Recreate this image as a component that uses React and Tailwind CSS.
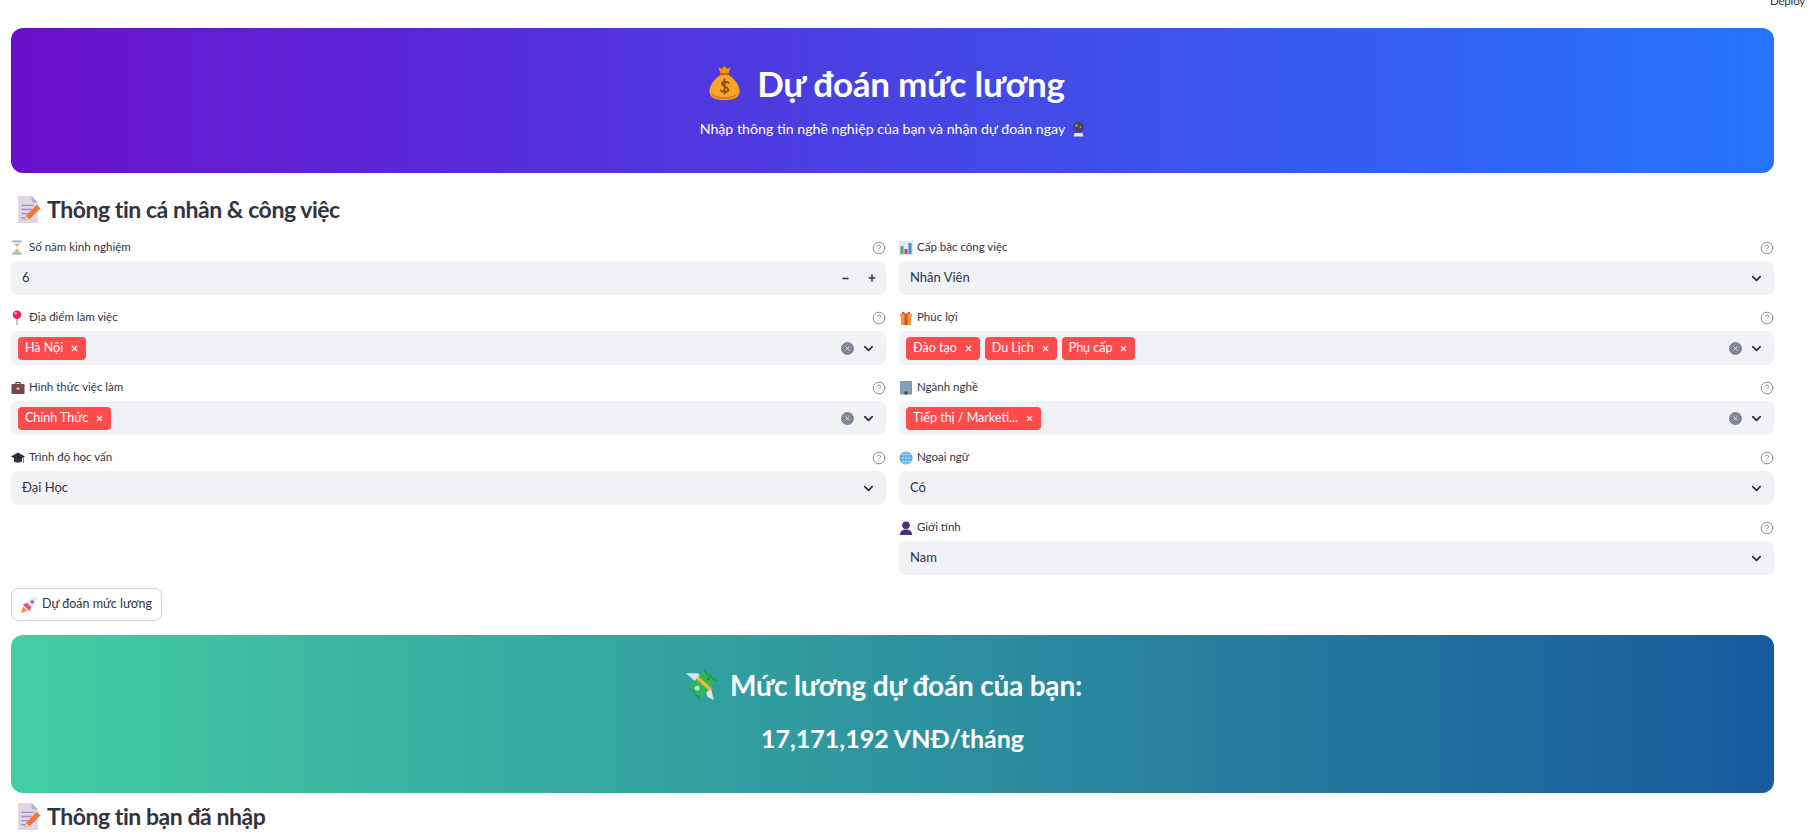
import { ChevronDown, Minus, Plus, X, CircleHelp } from "lucide-react";

const MoneyBag = ({ className }) => (
  <svg viewBox="0 0 32 36" className={className}>
    <path d="M10 2l3 2 3-3 3 3 3-2-2 7h-8z" fill="#e8930c" />
    <rect x="11.5" y="8" width="9" height="2.5" rx="1" fill="#b8620f" />
    <path d="M12 10h8c6 4 11 10 11 16 0 7-6 9-15 9S1 33 1 26c0-6 5-12 11-16z" fill="#f5a623" />
    <path d="M3 28c0 4 6 6 13 6s13-2 13-6c-3 3-8 4-13 4s-10-1-13-4z" fill="#e07b1a" />
    <path d="M20 18c-1-1.500-6-2-6.500 .5S20 22 19.800 25c-.2 2.500-6 2.500-7.500 .5M16 14.500v14" fill="none" stroke="#8a4a12" strokeWidth="1.800" strokeLinecap="round" />
  </svg>
);

const Memo = ({ className }) => (
  <svg viewBox="0 0 24 28" className={className}>
    <path d="M2 1h13l6 6v20H2z" fill="#ddd6e8" />
    <path d="M15 1l6 6h-6z" fill="#b9aecb" />
    <path d="M5 10h12M5 14h10M5 18h7M5 22h4" stroke="#9d93ae" strokeWidth="1.400" />
    <path d="M8 25l1.500-5L20 9.500l3.500 3.500L13 23.500z" fill="#f4743b" />
    <path d="M8 25l1.500-5 3.500 3.500z" fill="#f8c9a0" />
  </svg>
);

const Hourglass = () => (
  <svg viewBox="0 0 12 16" className="w-[12px] h-[15px]">
    <rect x="1" y="0.500" width="10" height="2" fill="#8fb3c9" />
    <rect x="1" y="13.500" width="10" height="2" fill="#8fb3c9" />
    <path d="M2 2.500h8c0 3-3 4-3 5.500s3 2.500 3 5.500H2c0-3 3-4 3-5.500S2 5.500 2 2.500z" fill="#e3edf2" />
    <path d="M3.500 4h5c-.5 1.500-2 2.500-2.500 3.500C5.500 6.500 4 5.500 3.500 4zM3 13.500c.5-2 2.500-3 3-4 .5 1 2.500 2 3 4z" fill="#eab04f" />
  </svg>
);

const Pin = () => (
  <svg viewBox="0 0 12 16" className="w-[12px] h-[15px]">
    <path d="M6 9v7" stroke="#9a9aa5" strokeWidth="1.200" />
    <circle cx="6" cy="5" r="4.500" fill="#e91e63" />
    <circle cx="4.500" cy="3.500" r="1.300" fill="#f8a0bd" />
  </svg>
);

const Briefcase = () => (
  <svg viewBox="0 0 14 14" className="w-[14px] h-[14px]">
    <path d="M5 3V1.500h4V3" fill="none" stroke="#4a3038" strokeWidth="1.200" />
    <rect x="0.500" y="3" width="13" height="10" rx="1" fill="#74474f" />
    <rect x="5.500" y="6.500" width="3" height="2.500" fill="#d9b25f" />
  </svg>
);

const GradCap = () => (
  <svg viewBox="0 0 14 14" className="w-[14px] h-[14px]">
    <path d="M3 7v3.500c1 1.500 7 1.500 8 0V7z" fill="#3c3446" />
    <path d="M7 1.500L14 5.500 7 9 0 5.500z" fill="#2f2a38" />
    <path d="M12.500 6v6" stroke="#e0603c" strokeWidth="1" />
  </svg>
);

const BarChart = () => (
  <svg viewBox="0 0 14 14" className="w-[14px] h-[14px]">
    <rect width="14" height="14" fill="#dfe7ec" />
    <rect x="1.500" y="5" width="3" height="8" fill="#45b36b" />
    <rect x="5.500" y="8" width="3" height="5" fill="#e8356d" />
    <rect x="9.500" y="2" width="3" height="11" fill="#3a93d8" />
  </svg>
);

const Gift = () => (
  <svg viewBox="0 0 14 14" className="w-[14px] h-[14px]">
    <path d="M7 3L4 .500 2.500 2 4 3.500zM7 3l3-2.500L11.500 2 10 3.500z" fill="#e0463c" />
    <rect x="1" y="3" width="12" height="3" fill="#f2a33a" />
    <rect x="2" y="6" width="10" height="8" fill="#ee9a2e" />
    <rect x="5.500" y="3" width="3" height="11" fill="#e0463c" />
  </svg>
);

const Office = () => (
  <svg viewBox="0 0 14 14" className="w-[14px] h-[15px]">
    <rect x="1" y="0.500" width="12" height="13.500" fill="#8a98a6" />
    <rect x="3" y="2" width="8" height="9" fill="#7fa9cc" />
    <path d="M5.500 2v9M8.500 2v9M3 5h8M3 8h8" stroke="#8a98a6" strokeWidth=".6" />
    <rect x="5.500" y="11" width="3" height="3" fill="#3d4a57" />
  </svg>
);

const Globe = () => (
  <svg viewBox="0 0 14 14" className="w-[14px] h-[14px]">
    <circle cx="7" cy="7" r="6.500" fill="#4aa6e8" />
    <path d="M.500 7h13M7 .500v13M2 3.500h10M2 10.500h10" stroke="#bfe2f8" strokeWidth=".7" />
    <ellipse cx="7" cy="7" rx="3.200" ry="6.500" fill="none" stroke="#bfe2f8" strokeWidth=".7" />
  </svg>
);

const Bust = () => (
  <svg viewBox="0 0 14 14" className="w-[14px] h-[14px]">
    <circle cx="7" cy="4.300" r="3.800" fill="#4f2d7f" />
    <path d="M1 14c0-4 2.500-5.500 6-5.500s6 1.500 6 5.500z" fill="#4f2d7f" />
  </svg>
);

const Rocket = () => (
  <svg viewBox="0 0 14 14" className="w-[16px] h-[16px]">
    <path d="M4 6.500C6 3 9.500 .500 14 0 13.500 4.500 11 8 7.500 10z" fill="#e8e2ee" />
    <path d="M1.500 6.500L5 5l4 4-1.500 3.500z" fill="#ec4f7d" />
    <circle cx="9.800" cy="4.200" r="1.400" fill="#5a6fb0" />
    <path d="M0 14l1.800-5.500L5.500 12z" fill="#f58b3c" />
  </svg>
);

const MoneyWings = () => (
  <svg viewBox="0 0 30 30" className="w-[32px] h-[32px]">
    <path d="M0 4h11l5 5-6 4zM18 19l5-3 3 13-6-3z" fill="#dfe4ea" />
    <path d="M17 1l12 10-15 17L3 17z" fill="#2fb45f" />
    <path d="M17 1l12 10-1 1.200L16 2.200zM3 17l11 11-1.200 .3L3 18.500z" fill="#1f9a4c" />
    <path d="M9.500 9.300l2.200-2.300 12.300 11-2.100 2.400z" fill="#f6b62a" />
    <circle cx="10.500" cy="18" r="2.300" fill="#bfeacb" />
    <circle cx="21" cy="9" r="1.500" fill="#1f8f48" />
  </svg>
);

const CrystalBall = () => (
  <svg viewBox="0 0 12 16" className="w-[13px] h-[16px]">
    <circle cx="6" cy="6" r="5.500" fill="#4a4560" />
    <circle cx="4" cy="4.500" r="1.100" fill="#f2b35e" />
    <circle cx="8" cy="6" r=".7" fill="#c9c2e8" />
    <path d="M2 12h8l1 3.500H1z" fill="#e8e4f2" />
  </svg>
);

function Tag({ text }) {
  return (
    <span className="h-[23px] px-[7px] flex items-center gap-[7px] rounded-[4px] bg-[#ff4b4b] text-white text-[12.500px]">
      {text}
      <X className="w-[9px] h-[9px]" strokeWidth={3} />
    </span>
  );
}

function Field({ icon, label, children }) {
  return (
    <div>
      <div className="h-[17px] mb-[5px] flex items-center text-[11.500px] text-[#31333f]">
        <span className="w-[18px] flex shrink-0 justify-start">{icon}</span>
        <span className="flex-1 mt-[-2px]">{label}</span>
        <CircleHelp className="w-[14px] h-[14px] text-[#7f8187]" strokeWidth={1.500} />
      </div>
      <div className="h-[34px] bg-[#f0f2f6] rounded-[7px] flex items-center text-[#31333f] text-[13px]">
        {children}
      </div>
    </div>
  );
}

function SelectBox({ icon, label, value }) {
  return (
    <Field icon={icon} label={label}>
      <span className="flex-1 pl-[11px]">{value}</span>
      <ChevronDown className="w-[15px] h-[15px] mr-[10px] text-[#262730]" strokeWidth={2.500} />
    </Field>
  );
}

function MultiBox({ icon, label, tags }) {
  return (
    <Field icon={icon} label={label}>
      <div className="flex-1 flex gap-[5px] pl-[7px]">
        {tags.map((t) => (
          <Tag key={t} text={t} />
        ))}
      </div>
      <span className="w-[13px] h-[13px] rounded-full bg-[#808495] flex items-center justify-center mr-[7px]">
        <X className="w-[7px] h-[7px] text-[#f0f2f6]" strokeWidth={3} />
      </span>
      <ChevronDown className="w-[15px] h-[15px] mr-[10px] text-[#262730]" strokeWidth={2.500} />
    </Field>
  );
}

export default function App() {
  return (
    <div className="relative h-screen overflow-hidden bg-white pt-[28px] pl-[11px] pr-[36px] font-['Lato','Noto_Sans',sans-serif]">
      <span className="absolute right-[5px] top-[-8px] text-[11.500px] tracking-[-0.2px] text-[#31333f]">Deploy</span>

      <div className="h-[145px] rounded-[12px] bg-[linear-gradient(90deg,#6a11cb,#2575fc)] text-white flex flex-col items-center pt-[30px]">
        <h1 className="h-[50px] mr-[12px] flex items-center gap-[16px] text-[35px] tracking-[-0.25px] font-bold">
          <MoneyBag className="w-[33px] h-[36px]" />
          Dự đoán mức lương
        </h1>
        <p className="mt-[10px] flex items-center gap-[7px] text-[14.200px]">
          Nhập thông tin nghề nghiệp của bạn và nhận dự đoán ngay
          <CrystalBall />
        </p>
      </div>

      <h2 className="mt-[21px] mb-[15px] h-[30px] flex items-center gap-[6px] text-[23px] tracking-[-0.45px] font-bold text-[#31333f]">
        <span className="pl-[5px]"><Memo className="w-[25px] h-[29px]" /></span>
        Thông tin cá nhân &amp; công việc
      </h2>

      <div className="grid grid-cols-2 gap-x-[13px]">
        <div className="flex flex-col gap-[14px]">
          <Field icon={<Hourglass />} label="Số năm kinh nghiệm">
            <span className="flex-1 pl-[11px]">6</span>
            <Minus className="w-[9px] h-[9px] mr-[17px] text-[#31333f]" strokeWidth={3.500} />
            <Plus className="w-[10px] h-[10px] mr-[9px] text-[#31333f]" strokeWidth={3.500} />
          </Field>
          <MultiBox icon={<Pin />} label="Địa điểm làm việc" tags={["Hà Nội"]} />
          <MultiBox icon={<Briefcase />} label="Hình thức việc làm" tags={["Chính Thức"]} />
          <SelectBox icon={<GradCap />} label="Trình độ học vấn" value="Đại Học" />
        </div>
        <div className="flex flex-col gap-[14px]">
          <SelectBox icon={<BarChart />} label="Cấp bậc công việc" value="Nhân Viên" />
          <MultiBox icon={<Gift />} label="Phúc lợi" tags={["Đào tạo", "Du Lịch", "Phụ cấp"]} />
          <MultiBox icon={<Office />} label="Ngành nghề" tags={["Tiếp thị / Marketi..."]} />
          <SelectBox icon={<Globe />} label="Ngoại ngữ" value="Có" />
          <SelectBox icon={<Bust />} label="Giới tính" value="Nam" />
        </div>
      </div>

      <button className="mt-[13px] h-[33px] w-[151px] flex items-center justify-center gap-[5px] rounded-[7px] border border-[#d0d0d5] bg-white text-[12.500px] text-[#31333f]">
        <Rocket />
        Dự đoán mức lương
      </button>

      <div className="mt-[14px] h-[158px] rounded-[12px] bg-[linear-gradient(90deg,#43cea2,#185a9d)] text-white flex flex-col items-center pt-[28px]">
        <h2 className="h-[44px] mr-[17px] flex items-center gap-[12px] text-[28px] tracking-[-0.2px] font-bold">
          <MoneyWings />
          Mức lương dự đoán của bạn:
        </h2>
        <p className="mt-[13px] text-[25px] font-bold">17,171,192 VNĐ/tháng</p>
      </div>

      <h2 className="mt-[8px] h-[30px] flex items-center gap-[6px] text-[23px] tracking-[-0.45px] font-bold text-[#31333f]">
        <span className="pl-[5px]"><Memo className="w-[25px] h-[29px]" /></span>
        Thông tin bạn đã nhập
      </h2>
    </div>
  );
}
